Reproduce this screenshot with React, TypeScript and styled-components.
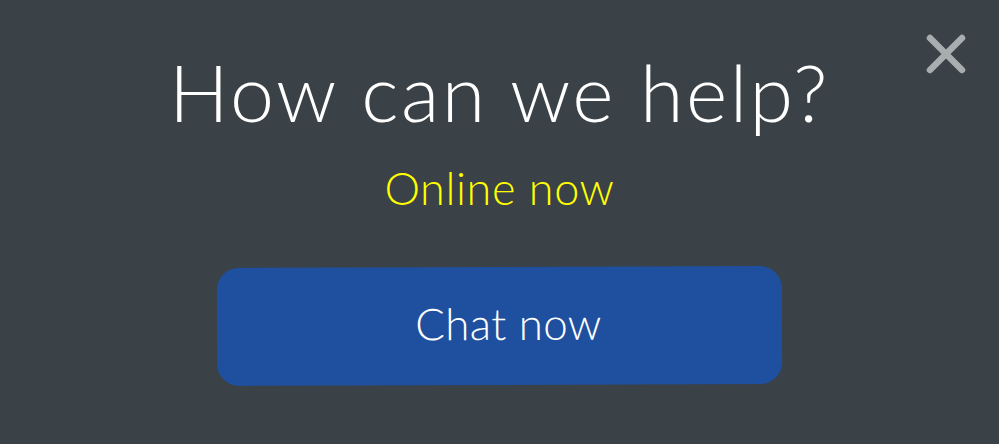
import styled, { createGlobalStyle } from 'styled-components';

const GlobalStyle = createGlobalStyle`
  html, body {
    margin: 0;
    padding: 0;
    background: #3a4248;
  }
  * {
    box-sizing: border-box;
  }
`;

export default function App() {
  return (
    <>
      <GlobalStyle />
      <Panel>
        <CloseButton aria-label="Close">
          <svg width="44" height="44" viewBox="0 0 44 44">
            <path
              d="M6 6 L38 38 M38 6 L6 38"
              stroke="#a8adb0"
              strokeWidth="6.5"
              strokeLinecap="round"
            />
          </svg>
        </CloseButton>
        <Title>How can we help?</Title>
        <Status>Online now</Status>
        <ChatButton>Chat now</ChatButton>
      </Panel>
    </>
  );
}

const Panel = styled.div`
  position: relative;
  width: 999px;
  height: 444px;
  background: #3a4248;
  display: flex;
  flex-direction: column;
  align-items: center;
  padding-top: 44px;
  font-family: Lato, 'Noto Sans', sans-serif;
`;

const CloseButton = styled.button`
  position: absolute;
  top: 32px;
  right: 31px;
  width: 44px;
  height: 44px;
  padding: 0;
  border: none;
  background: none;
  cursor: pointer;
  display: flex;
`;

const Title = styled.h1`
  margin: 0;
  font-size: 79px;
  font-weight: 300;
  line-height: 96px;
  color: #ffffff;
  letter-spacing: 2.5px;
`;

const Status = styled.div`
  margin-top: 20px;
  font-size: 45px;
  font-weight: 300;
  line-height: 56px;
  color: #ffff00;
  letter-spacing: 0.6px;
`;

const ChatButton = styled.button`
  margin-top: 51px;
  width: 565px;
  height: 118px;
  padding: 0 0 6px 18px;
  border: none;
  border-radius: 22px;
  background: #1f4f9f;
  color: #ffffff;
  font-family: inherit;
  font-size: 44px;
  font-weight: 300;
  letter-spacing: 0.3px;
  cursor: pointer;
  transform: rotate(-0.2deg);
`;
